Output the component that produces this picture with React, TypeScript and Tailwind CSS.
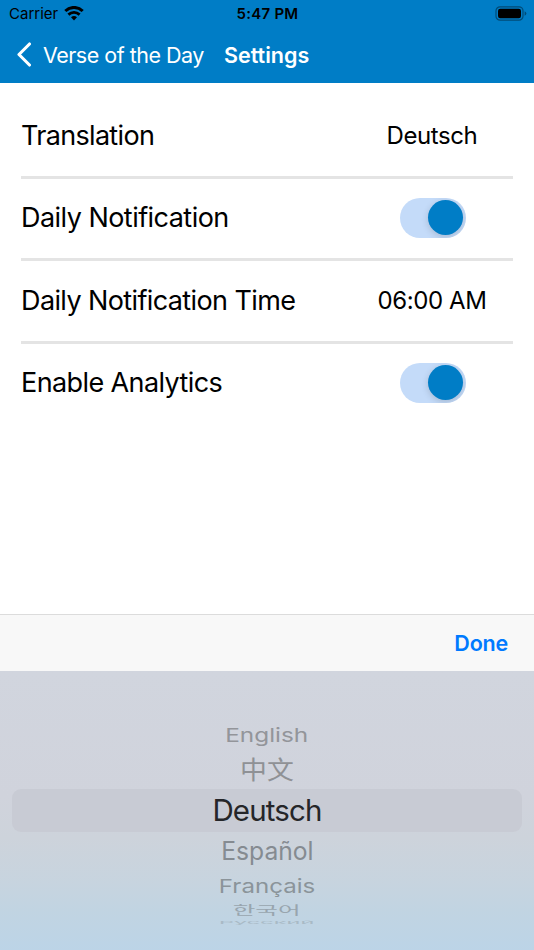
import React from "react";

function Toggle() {
  return (
    <div className="ml-px flex h-10 w-[66px] items-center justify-end overflow-hidden rounded-full bg-[#c4dbf9] pr-[2.5px]">
      <div className="size-[35px] rounded-full bg-[#007dc6] shadow-[0_2px_7px_rgba(0,0,0,0.16)]" />
    </div>
  );
}

function Row({ label, tracking, last, children }: { label: string; tracking: string; last?: boolean; children: React.ReactNode }) {
  return (
    <div className={`flex h-[82.5px] shrink-0 items-center justify-between border-b-[3px] pb-px ${last ? "border-transparent" : "border-[#e4e4e4]"}`}>
      <span className={`pt-px text-[27px] leading-8 ${tracking}`}>{label}</span>
      <div className="flex w-[162px] justify-center text-[24px] leading-8 tracking-[-0.42px]">{children}</div>
    </div>
  );
}

const wheel = [
  { text: "English", row: "h-[30px] mt-[49px]", look: "text-[28px] text-[#93959a] scale-x-[0.87] scale-y-[0.68]" },
  { text: "中文", row: "h-[39px]", look: "text-[28px] text-[#8f9195] scale-x-[0.96] scale-y-[0.91]" },
  { text: "Deutsch", row: "h-[43px]", look: "text-[29.5px] tracking-[-0.85px] text-[#252629]" },
  { text: "Español", row: "h-[38px]", look: "text-[28px] text-[#858b91] scale-x-[0.88] scale-y-[0.91]" },
  { text: "Français", row: "h-[32px]", look: "text-[28px] text-[#8b949a] scale-x-[0.86] scale-y-[0.68]" },
  { text: "한국어", row: "h-[17px]", look: "text-[28px] text-[#98a5ae] scale-x-[0.88] scale-y-[0.43]" },
  { text: "Русский", row: "h-[8px]", look: "text-[28px] text-[#a9bac6] scale-x-[0.84] scale-y-[0.14]" },
];

export default function App() {
  return (
    <div className="flex h-[950px] w-[534px] flex-col overflow-hidden bg-white font-['Inter','Noto_Sans_CJK_SC',sans-serif] text-black">
      <header className="h-[83px] shrink-0 bg-[#007dc6]">
        <div className="grid h-[27px] grid-cols-3 items-center pl-[9px] pr-2 text-[15px] leading-5">
          <div className="flex items-center gap-1.5">
            <span>Carrier</span>
            <svg width="20" height="15" viewBox="0 0 20 15" fill="none" stroke="black">
              <path d="M1.3 5C6.2.3 13.8.3 18.7 5" strokeWidth="3.1" />
              <path d="M4.4 8.6C7.6 5.7 12.4 5.7 15.6 8.6" strokeWidth="2.8" />
              <path d="M7 11.2Q10 8.8 13 11.2L10 14.4Z" fill="black" stroke="none" />
            </svg>
          </div>
          <span className="text-center font-semibold tracking-[0.25px]">5:47 PM</span>
          <svg className="-mr-px justify-self-end" width="32" height="15" viewBox="0 0 32 15">
            <rect x="1" y=".8" width="27" height="13.4" rx="4" fill="none" stroke="#004b77" strokeWidth="1.2" />
            <rect x="3" y="2.8" width="23" height="9.4" rx="2.2" fill="black" />
            <path d="M29.6 5.2q1.8.8 1.8 2.3t-1.8 2.3z" fill="#004b77" />
          </svg>
        </div>
        <div className="flex h-[55px] items-center pl-4 text-[21.5px] leading-7 text-white">
          <svg width="15" height="25" viewBox="0 0 15 25" fill="none" stroke="white" strokeWidth="3.1" strokeLinecap="round" strokeLinejoin="round">
            <path d="M13.5 2L3 12.5L13.5 23" />
          </svg>
          <span className="ml-3 w-[161px] whitespace-nowrap tracking-[-0.5px]">Verse of the Day</span>
          <span className="ml-5 font-semibold">Settings</span>
        </div>
      </header>

      <main className="flex flex-1 flex-col px-[21px] pt-[13px]">
        <Row label="Translation" tracking="tracking-[-0.68px]"><span className="pt-0.5">Deutsch</span></Row>
        <Row label="Daily Notification" tracking="tracking-[-0.54px]"><Toggle /></Row>
        <Row label="Daily Notification Time" tracking="tracking-[-0.61px]"><span className="pt-0.5">06:00 AM</span></Row>
        <Row label="Enable Analytics" tracking="tracking-[-0.6px]" last><Toggle /></Row>
      </main>

      <div className="flex h-[57px] shrink-0 items-center justify-end border-t border-[#dcdcdc] bg-[#f8f8f8] pr-[26px] text-[21.5px] font-semibold tracking-[-0.2px] text-[#007aff]">
        <button>Done</button>
      </div>

      <div className="flex h-[279px] shrink-0 flex-col bg-[linear-gradient(180deg,#d1d5de_0%,#d0d3dc_45%,#cdd3db_60%,#c7d4df_76%,#c1d4e2_86%,#bcd4e7_100%)] px-3">
        {wheel.map((item) => (
          <div
            key={item.text}
            className={`flex shrink-0 items-center justify-center rounded-[9px] ${item.row} ${item.text === "Deutsch" ? "bg-[#c8cbd4]" : ""}`}
          >
            <span className={`whitespace-nowrap leading-none ${item.look}`}>{item.text}</span>
          </div>
        ))}
      </div>
    </div>
  );
}
